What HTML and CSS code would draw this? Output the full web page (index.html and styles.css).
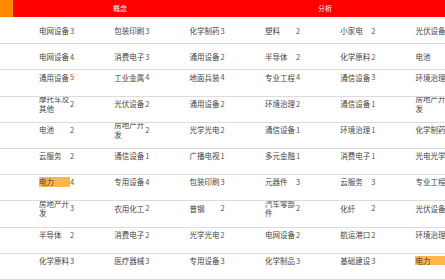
FILE: index.html
```html
<!DOCTYPE html>
<html lang="zh">
<head>
<meta charset="utf-8">
<link rel="stylesheet" href="styles.css">
</head>
<body>
<div class="board">
  <div class="head">
    <div class="head-corner"></div>
    <div class="head-group head-group--a">概念</div>
    <div class="head-group head-group--b">分析</div>
  </div>
  <div class="rows">
    <div class="row row--mid">
      <div class="lead"></div>
      <div class="cell"><span class="name">电网设备</span><span class="num">3</span></div>
      <div class="cell"><span class="name">包装印刷</span><span class="num">3</span></div>
      <div class="cell"><span class="name">化学制药</span><span class="num">3</span></div>
      <div class="cell"><span class="name">塑料</span><span class="num">2</span></div>
      <div class="cell"><span class="name">小家电</span><span class="num">2</span></div>
      <div class="cell"><span class="name">光伏设备</span><span class="num">2</span></div>
    </div>
    <div class="row row--mid">
      <div class="lead"></div>
      <div class="cell"><span class="name">电网设备</span><span class="num">4</span></div>
      <div class="cell"><span class="name">消费电子</span><span class="num">3</span></div>
      <div class="cell"><span class="name">通用设备</span><span class="num">2</span></div>
      <div class="cell"><span class="name">半导体</span><span class="num">2</span></div>
      <div class="cell"><span class="name">化学原料</span><span class="num">2</span></div>
      <div class="cell"><span class="name">电池</span><span class="num">2</span></div>
    </div>
    <div class="row">
      <div class="lead"></div>
      <div class="cell"><span class="name">通用设备</span><span class="num num--hot">5</span></div>
      <div class="cell"><span class="name">工业金属</span><span class="num">4</span></div>
      <div class="cell"><span class="name">地面兵装</span><span class="num">4</span></div>
      <div class="cell"><span class="name">专业工程</span><span class="num">4</span></div>
      <div class="cell"><span class="name">通信设备</span><span class="num">3</span></div>
      <div class="cell"><span class="name">环境治理</span><span class="num">3</span></div>
    </div>
    <div class="row">
      <div class="lead"></div>
      <div class="cell"><span class="name">摩托车及其他</span><span class="num">2</span></div>
      <div class="cell"><span class="name">光伏设备</span><span class="num">2</span></div>
      <div class="cell"><span class="name">通用设备</span><span class="num">2</span></div>
      <div class="cell"><span class="name">环境治理</span><span class="num">2</span></div>
      <div class="cell"><span class="name">通信设备</span><span class="num">1</span></div>
      <div class="cell"><span class="name">房地产开发</span><span class="num">1</span></div>
    </div>
    <div class="row">
      <div class="lead"></div>
      <div class="cell"><span class="name">电池</span><span class="num">2</span></div>
      <div class="cell"><span class="name">房地产开发</span><span class="num">2</span></div>
      <div class="cell"><span class="name">光学光电</span><span class="num">2</span></div>
      <div class="cell"><span class="name">通信设备</span><span class="num">1</span></div>
      <div class="cell"><span class="name">环境治理</span><span class="num">1</span></div>
      <div class="cell"><span class="name">化学制药</span><span class="num">1</span></div>
    </div>
    <div class="row">
      <div class="lead"></div>
      <div class="cell"><span class="name">云服务</span><span class="num">2</span></div>
      <div class="cell"><span class="name">通信设备</span><span class="num">1</span></div>
      <div class="cell"><span class="name">广播电视</span><span class="num">1</span></div>
      <div class="cell"><span class="name">多元金融</span><span class="num">1</span></div>
      <div class="cell"><span class="name">消费电子</span><span class="num">1</span></div>
      <div class="cell"><span class="name">光电光学</span><span class="num">1</span></div>
    </div>
    <div class="row">
      <div class="lead"></div>
      <div class="cell"><span class="name name--mark">电力</span><span class="num">4</span></div>
      <div class="cell"><span class="name">专用设备</span><span class="num">4</span></div>
      <div class="cell"><span class="name">包装印刷</span><span class="num">3</span></div>
      <div class="cell"><span class="name">元器件</span><span class="num">3</span></div>
      <div class="cell"><span class="name">云服务</span><span class="num">3</span></div>
      <div class="cell"><span class="name">专业工程</span><span class="num">3</span></div>
    </div>
    <div class="row">
      <div class="lead"></div>
      <div class="cell"><span class="name">房地产开发</span><span class="num">3</span></div>
      <div class="cell"><span class="name">农用化工</span><span class="num">2</span></div>
      <div class="cell"><span class="name">普钢</span><span class="num">2</span></div>
      <div class="cell"><span class="name">汽车零部件</span><span class="num">2</span></div>
      <div class="cell"><span class="name">化纤</span><span class="num">2</span></div>
      <div class="cell"><span class="name">光伏设备</span><span class="num">2</span></div>
    </div>
    <div class="row">
      <div class="lead"></div>
      <div class="cell"><span class="name">半导体</span><span class="num">2</span></div>
      <div class="cell"><span class="name">消费电子</span><span class="num">2</span></div>
      <div class="cell"><span class="name">光学光电</span><span class="num">2</span></div>
      <div class="cell"><span class="name">电网设备</span><span class="num">2</span></div>
      <div class="cell"><span class="name">航运港口</span><span class="num">2</span></div>
      <div class="cell"><span class="name">环境治理</span><span class="num">2</span></div>
    </div>
    <div class="row">
      <div class="lead"></div>
      <div class="cell"><span class="name">化学原料</span><span class="num">3</span></div>
      <div class="cell"><span class="name">医疗器械</span><span class="num">3</span></div>
      <div class="cell"><span class="name">专用设备</span><span class="num">3</span></div>
      <div class="cell"><span class="name">化学制品</span><span class="num">3</span></div>
      <div class="cell"><span class="name">基础建设</span><span class="num">3</span></div>
      <div class="cell"><span class="name name--mark">电力</span><span class="num">3</span></div>
    </div>
  </div>
</div>
</body>
</html>
```

FILE: styles.css
```css
html, body {
  margin: 0;
  padding: 0;
  background: #fff;
  overflow: hidden;
}

body {
  width: 445px;
  height: 280px;
  font-family: "Noto Sans CJK SC", "Noto Sans", sans-serif;
  font-size: 7.5px;
  color: #444;
}

.board {
  width: 520px;
}

.head {
  display: flex;
  height: 17px;
  background: #ff0000;
  color: #fff;
  font-size: 7px;
  line-height: 17px;
}

.head-corner {
  width: 13px;
  background: #ff8a00;
}

.head-group {
  text-align: center;
}

.head-group--a {
  width: 214px;
}

.head-group--b {
  width: 196px;
}

.rows {
  padding-top: 1px;
}

.row {
  display: flex;
  align-items: flex-start;
  box-sizing: border-box;
  height: 26.2px;
  padding-top: 2px;
  border-bottom: 1px solid #dcdcdc;
  overflow: hidden;
}

.row--mid {
  align-items: center;
  padding-top: 0;
}

.lead {
  flex: 0 0 26px;
}

.cell {
  flex: 0 0 75.3px;
  box-sizing: border-box;
  padding-left: 13px;
  height: 10px;
  display: flex;
  align-items: center;
  white-space: nowrap;
}

.name {
  flex: 0 0 31px;
  width: 31px;
  white-space: normal;
  line-height: 9.5px;
  word-break: break-all;
}

.name--mark {
  background: #ffb54c;
  color: #444;
}

.num {
  line-height: 10px;
  color: #555;
}

.num--hot {
  color: #e8322e;
}
```
